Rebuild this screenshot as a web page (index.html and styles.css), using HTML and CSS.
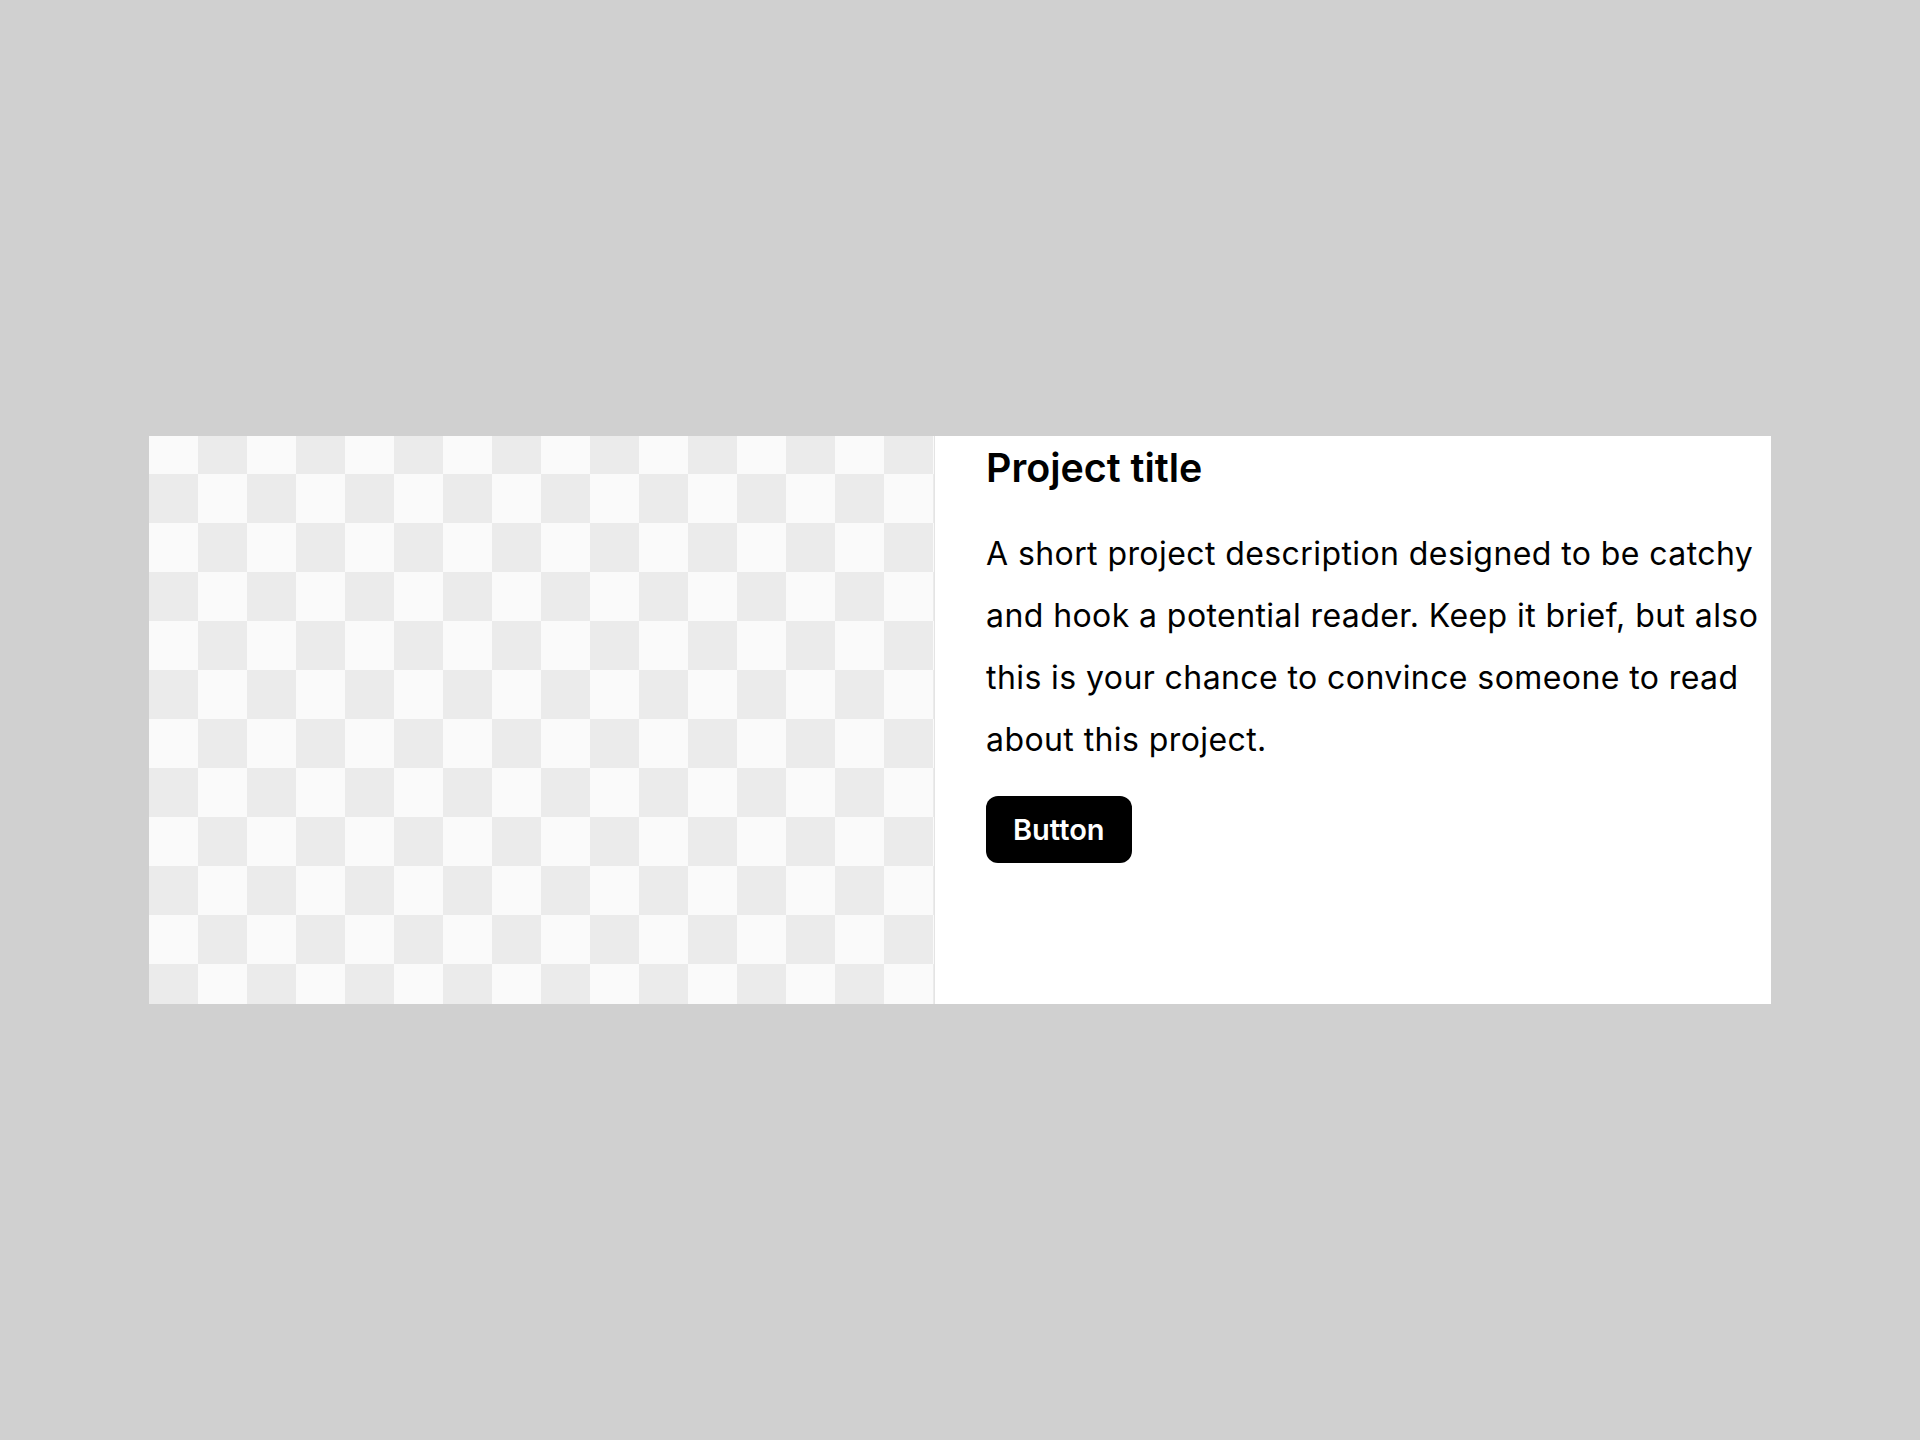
FILE: index.html
```html
<!DOCTYPE html>
<html lang="en">
<head>
    <meta charset="UTF-8">
    <meta name="viewport" content="width=device-width, initial-scale=1.0">
    <title>Project card</title>
    <link rel="stylesheet" href="styles.css">
</head>
<body>
    <div class="card">
        <div class="card-image"></div>
        <div class="card-body">
            <h2>Project title</h2>
            <p>A short project description designed to be catchy and hook a potential reader. Keep it brief, but also this is your chance to convince someone to read about this project.</p>
            <button type="button" class="btn">Button</button>
        </div>
    </div>
</body>
</html>
```

FILE: styles.css
```css
* {
    box-sizing: border-box;
    margin: 0;
    padding: 0;
    font-family: 'Inter', 'Noto Sans', sans-serif;
}
body {
    background: #d0d0d0;
    min-height: 100vh;
    display: flex;
    justify-content: center;
    align-items: center;
}
.card {
    width: 1622px;
    height: 568px;
    background: white;
    display: grid;
    grid-template-columns: 786px 1fr;
}
.card-image {
    border-right: 1px solid #e4e4e4;
    background-color: #fafafa;
    background-image: conic-gradient(#fafafa 25%, #ebebeb 0 50%, #fafafa 0 75%, #ebebeb 0);
    background-size: 98px 98px;
    background-position: 0 38px;
}
.card-body {
    padding: 8px 0 0 51px;
    color: #000;
}
h2 {
    font-size: 39.4px;
    line-height: 48px;
    font-weight: 600;
    margin-bottom: 31px;
}
p {
    font-size: 32px;
    line-height: 62px;
    letter-spacing: 0.013em;
    margin-bottom: 25px;
}
.btn {
    background: #000;
    color: white;
    border: none;
    border-radius: 12px;
    font-size: 29px;
    line-height: 35px;
    font-weight: 600;
    padding: 16px 27px;
    cursor: pointer;
}
```
